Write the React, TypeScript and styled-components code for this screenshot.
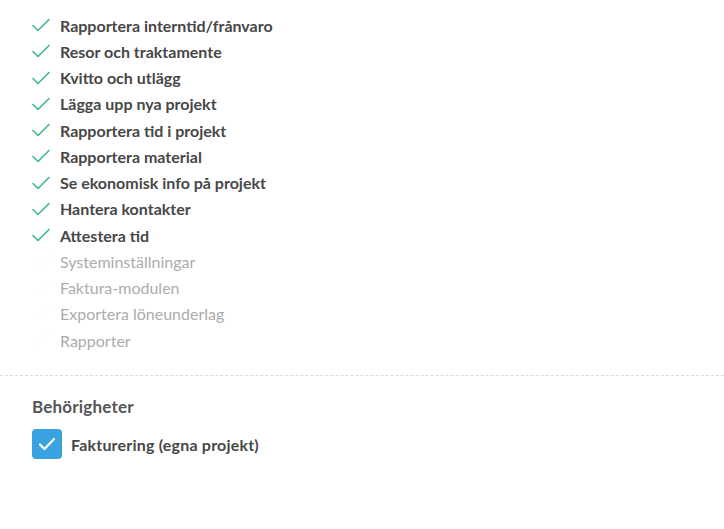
import * as React from 'react';
import styled, { createGlobalStyle } from 'styled-components';

const GlobalStyle = createGlobalStyle`
  body {
    margin: 0;
    background: #ffffff;
    font-family: "Lato", "Open Sans", sans-serif;
  }
`;

const Page = styled.div`
  width: 724px;
  height: 529px;
  background: #fff;
`;

const List = styled.ul`
  list-style: none;
  margin: 0;
  padding: 12px 0 22px 32px;
`;

const Item = styled.li<{ $on: boolean }>`
  display: flex;
  align-items: center;
  height: 26.25px;
  font-size: 16px;
  font-weight: ${p => (p.$on ? 700 : 400)};
  color: ${p => (p.$on ? '#474747' : '#acacac')};
`;

const Tick = styled.svg<{ $on: boolean }>`
  width: 18px;
  height: 14px;
  margin-right: 10px;
  flex: none;
  stroke: ${p => (p.$on ? '#3cb88f' : '#fcfcfc')};
`;

const Divider = styled.hr`
  border: 0;
  border-top: 1px dashed #dcdcdc;
  margin: 0;
`;

const Section = styled.section`
  padding: 20px 32px;
`;

const Heading = styled.h3`
  margin: 0 0 12px;
  font-size: 17px;
  font-weight: 700;
  letter-spacing: 0.2px;
  color: #555;
`;

const CheckRow = styled.label`
  display: flex;
  align-items: center;
  gap: 9px;
  font-size: 16px;
  font-weight: 700;
  letter-spacing: 0.2px;
  color: #474747;
`;

const Box = styled.span`
  width: 30px;
  height: 30px;
  border-radius: 4px;
  background: #38a3e0;
  display: flex;
  align-items: center;
  justify-content: center;
`;

const items: [string, boolean][] = [
  ['Rapportera interntid/frånvaro', true],
  ['Resor och traktamente', true],
  ['Kvitto och utlägg', true],
  ['Lägga upp nya projekt', true],
  ['Rapportera tid i projekt', true],
  ['Rapportera material', true],
  ['Se ekonomisk info på projekt', true],
  ['Hantera kontakter', true],
  ['Attestera tid', true],
  ['Systeminställningar', false],
  ['Faktura-modulen', false],
  ['Exportera löneunderlag', false],
  ['Rapporter', false],
];

export default function App() {
  return (
    <Page>
      <GlobalStyle />
      <List>
        {items.map(([label, on]) => (
          <Item key={label} $on={on}>
            <Tick $on={on} viewBox="0 0 18 14" fill="none" strokeWidth="1.6" strokeLinecap="round" strokeLinejoin="round">
              <path d="M1 7.5 L6 12.5 L17 1.5" />
            </Tick>
            {label}
          </Item>
        ))}
      </List>
      <Divider />
      <Section>
        <Heading>Behörigheter</Heading>
        <CheckRow>
          <Box>
            <svg width="18" height="14" viewBox="0 0 18 14" fill="none" stroke="#fff" strokeWidth="2.2" strokeLinecap="round" strokeLinejoin="round">
              <path d="M2 7.5 L6.5 12 L16 2" />
            </svg>
          </Box>
          Fakturering (egna projekt)
        </CheckRow>
      </Section>
    </Page>
  );
}
